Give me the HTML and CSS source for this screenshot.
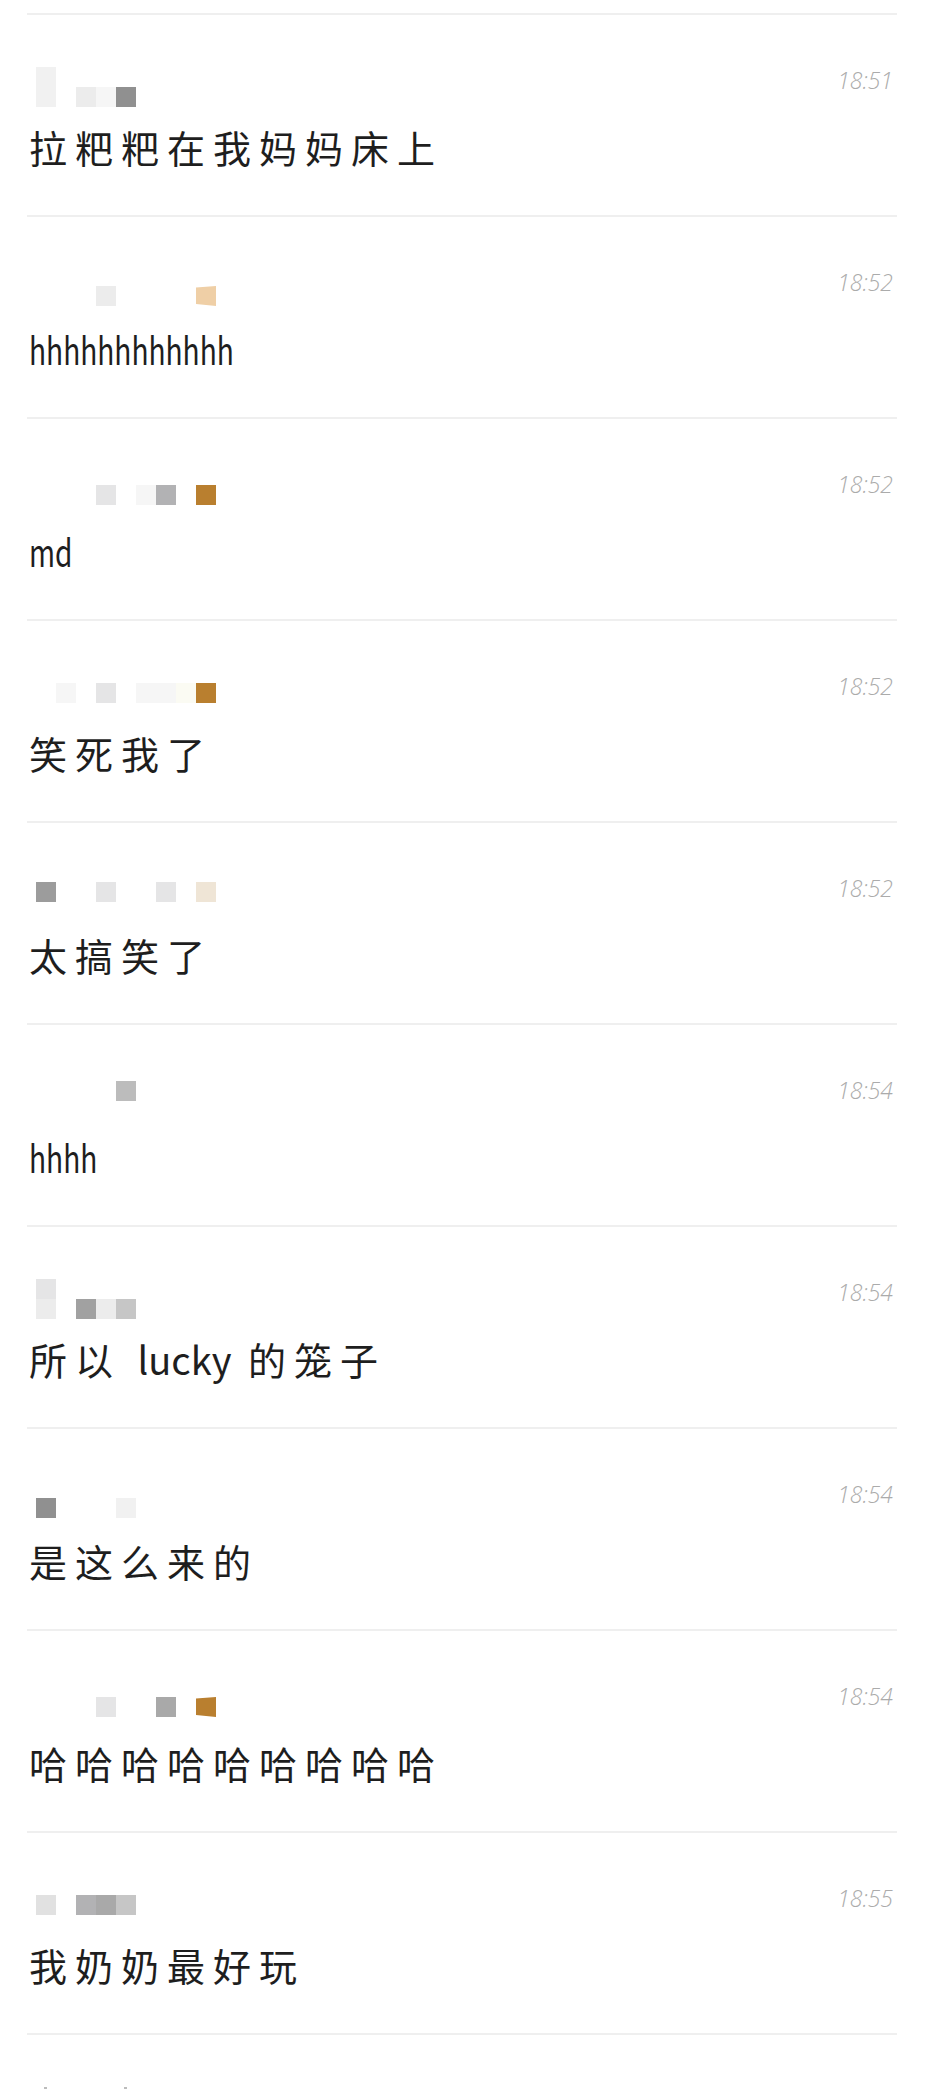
FILE: index.html
```html
<!DOCTYPE html>
<html lang="zh-CN">
<head>
    <meta charset="UTF-8">
    <meta name="viewport" content="width=device-width, initial-scale=1.0">
    <title>聊天记录</title>
    <link rel="stylesheet" href="styles.css">
</head>
<body>
    <div class="chat">

        <!-- 1 -->
        <div class="row">
            <div class="row-head">
                <div class="name drop-5">
                    <i class="cell top x0 c-f1"></i>
                    <i class="cell x0 c-f1"></i>
                    <i class="cell x2 c-ed"></i>
                    <i class="cell x3 c-f6"></i>
                    <i class="cell x4 c-90"></i>
                </div>
                <span class="time">18:51</span>
            </div>
            <p class="msg">拉粑粑在我妈妈床上</p>
        </div>

        <!-- 2 -->
        <div class="row">
            <div class="row-head">
                <div class="name drop-4">
                    <i class="cell x3 c-ed"></i>
                    <i class="cell x8 c-peach skew"></i>
                </div>
                <span class="time">18:52</span>
            </div>
            <p class="msg"><span class="en narrow">hhhhhhhhhhhh</span></p>
        </div>

        <!-- 3 -->
        <div class="row">
            <div class="row-head">
                <div class="name drop-3">
                    <i class="cell x3 c-e6"></i>
                    <i class="cell x5 c-f6"></i>
                    <i class="cell x6 c-b2"></i>
                    <i class="cell x8 c-gold"></i>
                </div>
                <span class="time">18:52</span>
            </div>
            <p class="msg"><span class="en narrow">md</span></p>
        </div>

        <!-- 4 -->
        <div class="row">
            <div class="row-head">
                <div class="name drop-2">
                    <i class="cell x1 c-f6"></i>
                    <i class="cell x3 c-e6"></i>
                    <i class="cell x5 c-f6"></i>
                    <i class="cell x6 c-f6"></i>
                    <i class="cell x7 c-cream"></i>
                    <i class="cell x8 c-gold"></i>
                </div>
                <span class="time">18:52</span>
            </div>
            <p class="msg">笑死我了</p>
        </div>

        <!-- 5 -->
        <div class="row">
            <div class="row-head">
                <div class="name drop-1">
                    <i class="cell x0 c-9c"></i>
                    <i class="cell x3 c-e6"></i>
                    <i class="cell x6 c-e6"></i>
                    <i class="cell x8 c-beige"></i>
                </div>
                <span class="time">18:52</span>
            </div>
            <p class="msg">太搞笑了</p>
        </div>

        <!-- 6 -->
        <div class="row">
            <div class="row-head">
                <div class="name drop-0">
                    <i class="cell x4 c-bc"></i>
                </div>
                <span class="time">18:54</span>
            </div>
            <p class="msg"><span class="en narrow">hhhh</span></p>
        </div>

        <!-- 7 -->
        <div class="row">
            <div class="row-head">
                <div class="name drop-5">
                    <i class="cell top x0 c-e6"></i>
                    <i class="cell x0 c-ed"></i>
                    <i class="cell x2 c-a1"></i>
                    <i class="cell x3 c-ed"></i>
                    <i class="cell x4 c-c6"></i>
                </div>
                <span class="time">18:54</span>
            </div>
            <p class="msg">所以 <span class="en">lucky</span> 的笼子</p>
        </div>

        <!-- 8 -->
        <div class="row">
            <div class="row-head">
                <div class="name drop-4">
                    <i class="cell x0 c-90"></i>
                    <i class="cell x4 c-f1"></i>
                </div>
                <span class="time">18:54</span>
            </div>
            <p class="msg">是这么来的</p>
        </div>

        <!-- 9 -->
        <div class="row">
            <div class="row-head">
                <div class="name drop-3">
                    <i class="cell x3 c-e6"></i>
                    <i class="cell x6 c-a8"></i>
                    <i class="cell x8 c-gold skew"></i>
                </div>
                <span class="time">18:54</span>
            </div>
            <p class="msg">哈哈哈哈哈哈哈哈哈</p>
        </div>

        <!-- 10 -->
        <div class="row">
            <div class="row-head">
                <div class="name drop-2">
                    <i class="cell x0 c-e1"></i>
                    <i class="cell x2 c-b2"></i>
                    <i class="cell x3 c-a8"></i>
                    <i class="cell x4 c-c6"></i>
                </div>
                <span class="time">18:55</span>
            </div>
            <p class="msg">我奶奶最好玩</p>
        </div>

        <!-- 11: só o começo aparece na tela -->
        <div class="row">
            <div class="row-head">
                <div class="name drop-5">
                    <i class="cell top x0 c-bc thin"></i>
                    <i class="cell top x4 c-bc thin"></i>
                </div>
            </div>
        </div>

    </div>
</body>
</html>
```

FILE: styles.css
```css
* {
    margin: 0;
    padding: 0;
    box-sizing: border-box;
}

body {
    font-family: "Noto Sans CJK SC", "Noto Sans", sans-serif;
    background-color: #fff;
    color: #1e1e1e;
    height: 100vh;
    overflow: hidden;
}

.chat {
    padding-top: 13px;
}

.row {
    margin: 0 30px 0 27px;
    height: 202px;
    border-top: 2px solid #efefef;
}

.row-head {
    height: 113px;
    display: flex;
    justify-content: space-between;
    align-items: flex-start;
}

/* nome borrado (mosaico) */
.name {
    margin-left: 9px;
    display: grid;
    grid-template-columns: repeat(9, 20px);
    grid-template-rows: 20px 20px;
}

.drop-0 { margin-top: 36px; }
.drop-1 { margin-top: 39px; }
.drop-2 { margin-top: 42px; }
.drop-3 { margin-top: 46px; }
.drop-4 { margin-top: 49px; }
.drop-5 { margin-top: 52px; }

.cell {
    display: block;
    grid-row: 2;
}

.cell.top { grid-row: 1; }

.cell.skew {
    clip-path: polygon(0 8%, 100% 0, 100% 100%, 0 90%);
}

.cell.thin {
    clip-path: polygon(40% 0, 55% 0, 55% 100%, 40% 100%);
}

.x0 { grid-column: 1; }
.x1 { grid-column: 2; }
.x2 { grid-column: 3; }
.x3 { grid-column: 4; }
.x4 { grid-column: 5; }
.x5 { grid-column: 6; }
.x6 { grid-column: 7; }
.x7 { grid-column: 8; }
.x8 { grid-column: 9; }

.c-f1 { background-color: #f1f1f1; }
.c-f6 { background-color: #f6f6f6; }
.c-ed { background-color: #ececec; }
.c-e6 { background-color: #e5e5e6; }
.c-e1 { background-color: #e1e1e1; }
.c-c6 { background-color: #c6c6c6; }
.c-bc { background-color: #bcbcbc; }
.c-b2 { background-color: #b2b2b4; }
.c-a8 { background-color: #a9a9a9; }
.c-a1 { background-color: #a1a1a1; }
.c-9c { background-color: #9c9c9c; }
.c-90 { background-color: #909090; }
.c-gold { background-color: #b97f2f; }
.c-peach { background-color: #efcfa6; }
.c-beige { background-color: #efe5d6; }
.c-cream { background-color: #fbfbf3; }

.time {
    margin-top: 54px;
    margin-right: 4px;
    font-family: "Open Sans", "Liberation Sans", sans-serif;
    font-weight: 300;
    font-style: italic;
    font-size: 23px;
    line-height: 23px;
    color: #ababab;
}

.msg {
    margin-left: 2px;
    font-size: 38px;
    line-height: 38px;
    letter-spacing: 8px;
    white-space: nowrap;
}

.en {
    letter-spacing: 0;
}

/* letras da letra de mão são bem estreitas */
.en.narrow {
    display: inline-block;
    transform: scaleX(0.74);
    transform-origin: left center;
}
```
